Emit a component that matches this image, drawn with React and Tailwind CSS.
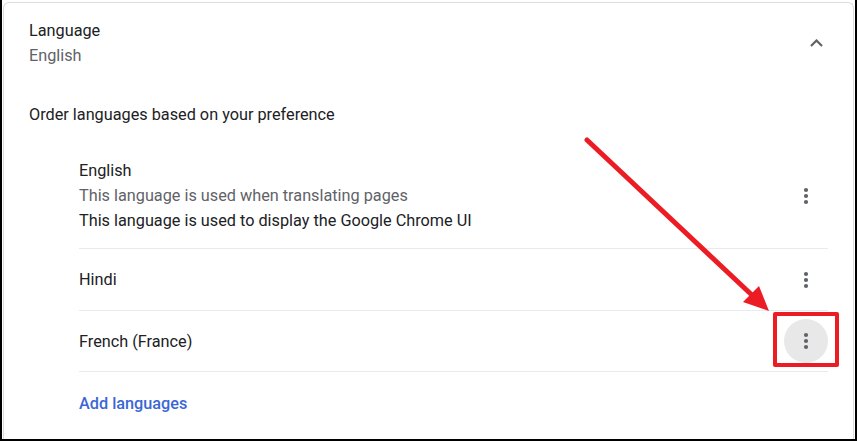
import React from "react";

const Kebab = ({ active }) => (
  <button
    className={
      "w-[44px] h-[44px] rounded-full flex items-center justify-center shrink-0 " +
      (active ? "bg-[#e8e8e9]" : "")
    }
  >
    <svg width="6" height="18" viewBox="0 0 6 18">
      <circle cx="3" cy="3" r="2.1" fill="#5f6368" />
      <circle cx="3" cy="9" r="2.1" fill="#5f6368" />
      <circle cx="3" cy="15" r="2.1" fill="#5f6368" />
    </svg>
  </button>
);

const App = () => {
  return (
    <div
      className="relative w-[857px] h-[441px] bg-white border-x-2 border-b-2 border-black overflow-hidden text-[16.25px] leading-[25px] text-[#202124]"
      style={{ fontFamily: "Roboto, 'Noto Sans', sans-serif" }}
    >
      <div className="mt-[2px] mx-[1px] h-full border border-b-0 border-[#dadce0] rounded-t-[6px]">
        {/* header */}
        <div className="flex items-center pt-[15px] pl-[25px] pr-[25px]">
          <div className="flex-1">
            <div>Language</div>
            <div className="text-[#5f6368]">English</div>
          </div>
          <div className="w-[24px] flex items-center justify-center">
            <svg width="13" height="8" viewBox="0 0 13 8">
              <polyline
                points="1,7 6.5,1.5 12,7"
                fill="none"
                stroke="#5f6368"
                strokeWidth="2.2"
              />
            </svg>
          </div>
        </div>

        <div className="mt-[34px] pl-[25px]">Order languages based on your preference</div>

        {/* language list */}
        <div className="mt-[15px] pl-[75px] pr-[25px]">
          <div className="flex items-center pt-[16px] pb-[15px] border-b border-[#e8eaed]">
            <div className="flex-1">
              <div>English</div>
              <div className="text-[#5f6368]">This language is used when translating pages</div>
              <div>This language is used to display the Google Chrome UI</div>
            </div>
            <Kebab />
          </div>
          <div className="flex items-center h-[62px] border-b border-[#e8eaed]">
            <div className="flex-1">Hindi</div>
            <Kebab />
          </div>
          <div className="flex items-center h-[61px] border-b border-[#e8eaed]">
            <div className="flex-1">French (France)</div>
            <Kebab active />
          </div>
          <div className="pt-[19px]">
            <span className="font-medium text-[#3b66d6]">Add languages</span>
          </div>
        </div>
      </div>

      {/* annotation */}
      <div className="absolute left-[771px] top-[312px] w-[66px] h-[55px] border-[4px] border-[#ec1c24] rounded-[2px]" />
      <svg className="absolute left-0 top-0" width="857" height="441" viewBox="0 0 857 441">
        <line x1="585" y1="140" x2="752" y2="297" stroke="#ec1c24" strokeWidth="5" strokeLinecap="round" />
        <polygon points="767,311 741,302 757,286" fill="#ec1c24" />
      </svg>
    </div>
  );
};

export default App;
